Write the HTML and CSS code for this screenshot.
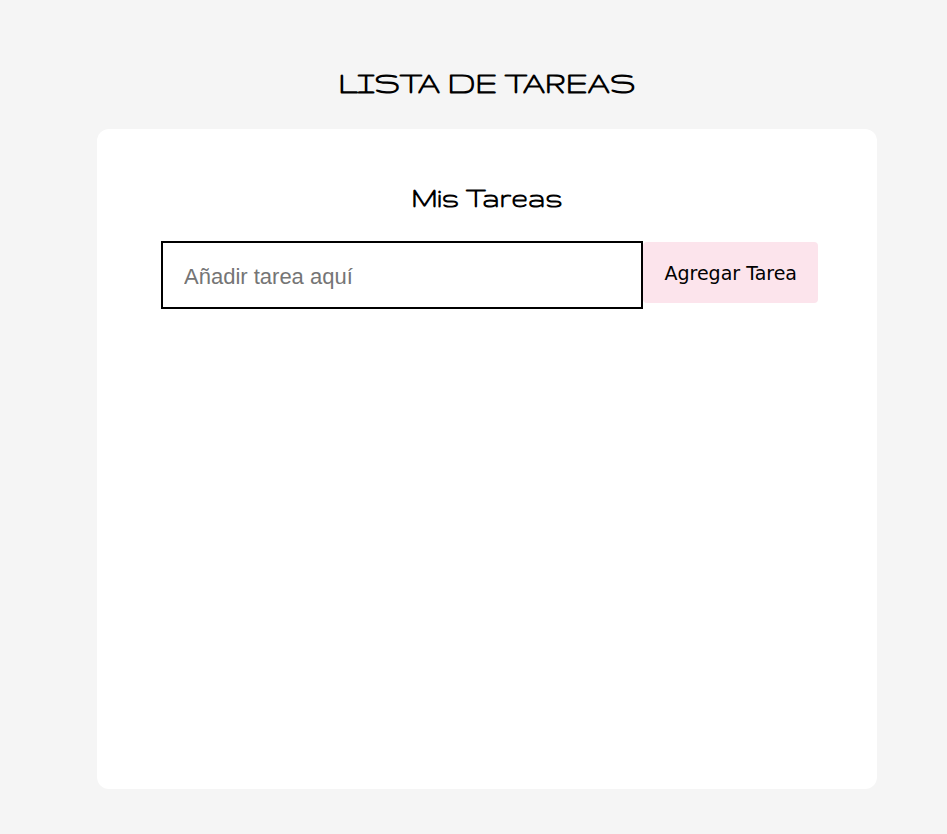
FILE: index.html
```html
<!DOCTYPE html>
<html lang="es">
<head>
<meta charset="utf-8">
<meta name="viewport" content="width=device-width, initial-scale=1">
<title>Lista de tareas</title>
<link rel="stylesheet" href="styles.css">
</head>
<body>
<main class="app">
<h1 class="app-title">LISTA DE TAREAS</h1>
<section class="task-panel">
<h2 class="panel-title">Mis Tareas</h2>
<form class="task-form">
<input class="task-input" type="text" name="tarea" placeholder="Añadir tarea aquí" aria-label="Añadir tarea aquí">
<button class="task-button" type="submit">Agregar Tarea</button>
</form>
</section>
</main>
</body>
</html>
```
FILE: styles.css
```css
* {
  box-sizing: border-box;
}

body {
  margin: 0;
  min-height: 100vh;
  background: #f5f5f5;
  color: #000;
  font-family: "DejaVu Sans", Verdana, sans-serif;
}

.app {
  display: flex;
  flex-direction: column;
  min-height: 100vh;
  padding: 63px 70px 45px 97px;
}

.app-title {
  margin: 0 0 26px;
  font-family: Gruppo, "DejaVu Sans", Verdana, sans-serif;
  font-size: 34px;
  font-weight: 700;
  line-height: 40px;
  text-align: center;
}

.task-panel {
  flex: 1;
  padding: 51px 59px 40px;
  border-radius: 12px;
  background: #fff;
}

.panel-title {
  margin: 0 0 25px;
  font-family: Gruppo, "DejaVu Sans", Verdana, sans-serif;
  font-size: 30px;
  font-weight: 700;
  line-height: 36px;
  text-align: center;
}

.task-form {
  display: flex;
  align-items: flex-start;
  padding-left: 5px;
}

.task-input {
  flex: 1;
  min-width: 0;
  height: 68px;
  padding: 4px 21px 0;
  border: 2px solid #000;
  background: #fff;
  font-family: "Liberation Sans", Arial, sans-serif;
  font-size: 22px;
}

.task-input::placeholder {
  color: #757575;
}

.task-button {
  height: 61px;
  margin-top: 1px;
  padding: 0 21px;
  border: 0;
  border-radius: 4px;
  background: #fce4ec;
  color: #000;
  font-family: "DejaVu Sans", Verdana, sans-serif;
  font-size: 19px;
}
```
